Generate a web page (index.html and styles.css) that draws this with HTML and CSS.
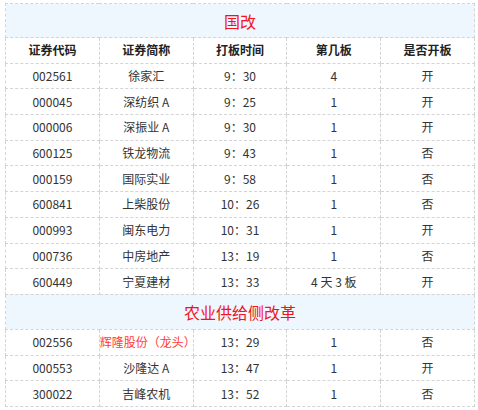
FILE: index.html
```html
<!DOCTYPE html>
<html lang="zh">
<head>
<meta charset="utf-8">
<link rel="stylesheet" href="styles.css">
</head>
<body>
<table class="stocks">
  <colgroup><col class="c"><col class="c"><col class="c"><col class="c"><col class="c"></colgroup>
  <tr class="title"><td colspan="5">国改</td></tr>
  <tr class="head"><th>证券代码</th><th>证券简称</th><th>打板时间</th><th>第几板</th><th>是否开板</th></tr>
  <tr><td>002561</td><td>徐家汇</td><td>9：30</td><td>4</td><td>开</td></tr>
  <tr><td>000045</td><td>深纺织 A</td><td>9：25</td><td>1</td><td>开</td></tr>
  <tr><td>000006</td><td>深振业 A</td><td>9：30</td><td>1</td><td>开</td></tr>
  <tr><td>600125</td><td>铁龙物流</td><td>9：43</td><td>1</td><td>否</td></tr>
  <tr><td>000159</td><td>国际实业</td><td>9：58</td><td>1</td><td>否</td></tr>
  <tr><td>600841</td><td>上柴股份</td><td>10：26</td><td>1</td><td>否</td></tr>
  <tr><td>000993</td><td>闽东电力</td><td>10：31</td><td>1</td><td>开</td></tr>
  <tr><td>000736</td><td>中房地产</td><td>13：19</td><td>1</td><td>否</td></tr>
  <tr><td>600449</td><td>宁夏建材</td><td>13：33</td><td>4 天 3 板</td><td>开</td></tr>
  <tr class="title t2"><td colspan="5">农业供给侧改革</td></tr>
  <tr><td>002556</td><td class="hot">辉隆股份（龙头）</td><td>13：29</td><td>1</td><td>否</td></tr>
  <tr><td>000553</td><td>沙隆达 A</td><td>13：47</td><td>1</td><td>开</td></tr>
  <tr><td>300022</td><td>吉峰农机</td><td>13：52</td><td>1</td><td>否</td></tr>
</table>
</body>
</html>
```
FILE: styles.css
```css
html, body {
  margin: 0;
  padding: 0;
  background: #fff;
}
body {
  padding: 3px 0 0 5px;
  font-family: "Noto Sans CJK SC", "Noto Sans", sans-serif;
  font-size: 12px;
  color: #333;
}
.stocks {
  border-collapse: collapse;
  width: 470px;
  table-layout: fixed;
}
.stocks td, .stocks th {
  border: 1px dashed #d4d4d4;
  text-align: center;
  padding: 0;
  height: 24.7px;
  line-height: 16px;
}
.stocks th {
  font-weight: bold;
  color: #222;
}
.title td {
  background: #eef6fe;
  color: #f2141c;
  font-size: 16px;
  height: 33px;
}
.t2 td {
  height: 34px;
}
.hot {
  color: #ff3a3a;
}
```
